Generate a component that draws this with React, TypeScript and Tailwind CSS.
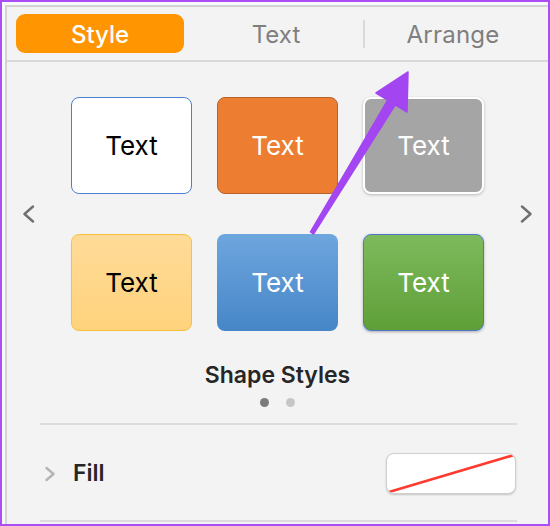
const styles = [
  { bg: "bg-white border-[1.5px] border-[#4c7fd1]", text: "text-black" },
  { bg: "bg-[#ed7d31] border border-[#b7632b]", text: "text-white" },
  { bg: "bg-[#a5a5a5] border-2 border-white shadow-[0_1px_3px_rgba(0,0,0,0.25)]", text: "text-white" },
  { bg: "bg-gradient-to-b from-[#ffdb98] to-[#ffd37c] border border-[#f6c13f]", text: "text-black" },
  { bg: "bg-gradient-to-b from-[#6ea6de] to-[#4686c8]", text: "text-white" },
  { bg: "bg-gradient-to-b from-[#7dba5c] to-[#5f9f37] border border-[#5077c6] shadow-[0_1px_3px_rgba(0,0,0,0.3)]", text: "text-white" },
];

function Chevron({ dir }: { dir: "left" | "right" }) {
  return (
    <svg width="13" height="18" viewBox="0 0 13 18" fill="none">
      <polyline
        points={dir === "left" ? "11,1.5 2.5,9 11,16.5" : "2,1.5 10.5,9 2,16.5"}
        stroke="#6f6f6f"
        strokeWidth="2.4"
        strokeLinecap="round"
        strokeLinejoin="round"
      />
    </svg>
  );
}

export default function App() {
  return (
    <div className="relative w-[550px] h-[526px] border-2 border-[#ab4ef5] bg-[#f9f9f9] pt-[3px] pl-[3px] font-['Inter',sans-serif]">
      <div className="h-full border-t-2 border-l-2 border-[#d3d3d3] bg-[#f3f3f3] flex flex-col">
        {/* tabs */}
        <div className="flex items-center h-[55px] pl-[9px] pr-[11px] border-b-2 border-[#d8d8d8]">
          <div className="w-[168px] h-[39px] rounded-[9px] bg-[#ff9500] flex items-center justify-center text-white text-[24px] leading-[39px] font-medium pt-[2px]">
            Style
          </div>
          <div className="w-[168px] ml-[8px] pt-[2px] text-center text-[24px] text-[#7f7f7f]">Text</div>
          <div className="w-[2px] h-[28px] bg-[#dadada] ml-[3px] mr-[2px]" />
          <div className="w-[168px] pt-[2px] pl-[4px] text-center text-[24px] tracking-[0.2px] text-[#7f7f7f]">Arrange</div>
        </div>

        {/* shape styles */}
        <div className="mt-[35px] flex items-center justify-between pl-[15px] pr-[15px]">
          <Chevron dir="left" />
          <div className="grid grid-cols-3 gap-x-[25px] gap-y-[40px]">
            {styles.map((s, i) => (
              <div
                key={i}
                className={`w-[121px] h-[97px] rounded-[8px] flex items-center justify-center ${s.bg}`}
              >
                <span className={`text-[26px] ${s.text}`}>Text</span>
              </div>
            ))}
          </div>
          <Chevron dir="right" />
        </div>

        <div className="mt-[30px] text-center text-[23px] leading-[28px] font-semibold text-[#262626]">
          Shape Styles
        </div>
        <div className="mt-[9px] flex justify-center gap-[17px]">
          <div className="w-[9px] h-[9px] rounded-full bg-[#7b7b7b]" />
          <div className="w-[9px] h-[9px] rounded-full bg-[#c6c6c6]" />
        </div>

        <div className="mt-[16px] ml-[33px] mr-[31px] h-[2px] bg-[#dcdcdc]" />

        {/* fill */}
        <div className="mt-[28px] ml-[38px] mr-[32px] flex items-center h-[41px]">
          <svg width="11" height="16" viewBox="0 0 11 16" fill="none">
            <polyline points="1.5,2 8.5,8 1.5,14" stroke="#b4b4b4" strokeWidth="2.4" strokeLinecap="round" strokeLinejoin="round" />
          </svg>
          <span className="ml-[17px] text-[23px] font-semibold text-[#262626]">Fill</span>
          <div className="ml-auto w-[130px] h-[41px] rounded-[8px] bg-white border border-[#cfcfcf] shadow-[0_1px_2px_rgba(0,0,0,0.2)] overflow-hidden">
            <svg width="128" height="39" viewBox="0 0 128 39">
              <line x1="2" y1="38" x2="127" y2="1" stroke="#ff3b30" strokeWidth="2.6" />
            </svg>
          </div>
        </div>

        <div className="mt-[26px] ml-[33px] mr-[31px] h-[2px] bg-[#dcdcdc]" />
      </div>

      {/* annotation arrow */}
      <svg className="absolute left-[-2px] top-[-2px] pointer-events-none" width="550" height="526" viewBox="0 0 550 526">
        <polygon
          points="310.5,232 387.7,100.1 376,93 408,72 407,112 395.3,104.9 313.5,234"
          fill="#a346f2"
          stroke="#a346f2"
          strokeWidth="1.5"
          strokeLinejoin="round"
        />
      </svg>
    </div>
  );
}
